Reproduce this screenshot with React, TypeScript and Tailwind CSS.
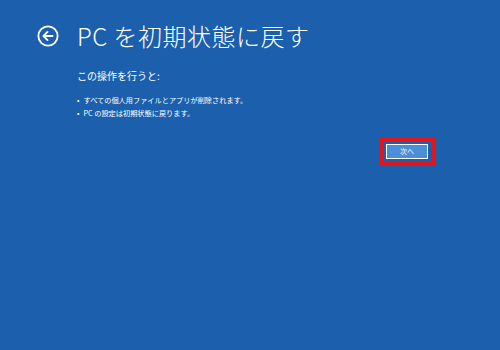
export default function App() {
  const font = { fontFamily: '"Noto Sans CJK JP", "Noto Sans", sans-serif' }
  return (
    <div className="w-[500px] h-[350px] bg-[#1c5fad] text-white overflow-hidden" style={font}>
      {/* Header */}
      <div className="flex items-center pl-[37px] pt-[20px]">
        <svg className="w-[22px] h-[22px] shrink-0" viewBox="0 0 24 24" fill="none" stroke="white" strokeWidth={2}>
          <circle cx="12" cy="12" r="10.5" />
          <path d="M17 12H7.5M11.5 7.5L7 12l4.5 4.5" strokeLinecap="round" strokeLinejoin="round" />
        </svg>
        <h1 className="ml-[18px] text-[24px] leading-[32px] font-light tracking-[0.5px]">PC を初期状態に戻す</h1>
      </div>

      {/* Body */}
      <div className="pl-[77px] pt-[17px]">
        <p className="text-[10px] leading-[14px]">この操作を行うと:</p>
        <ul className="mt-[11px] text-[7.2px] leading-[13px]">
          <li className="flex gap-[4px]"><span>•</span><span>すべての個人用ファイルとアプリが削除されます。</span></li>
          <li className="flex gap-[4px]"><span>•</span><span>PC の設定は初期状態に戻ります。</span></li>
        </ul>
      </div>

      {/* Next button, highlighted */}
      <div className="flex justify-end pr-[65px] mt-[17px]">
        <div className="flex border-[4px] border-[#e4141b] p-[3px]">
          <button className="flex items-center justify-center w-[42px] h-[15px] bg-[#4b8fd8] border border-white text-[7px] leading-none text-white">
            次へ
          </button>
        </div>
      </div>
    </div>
  )
}
